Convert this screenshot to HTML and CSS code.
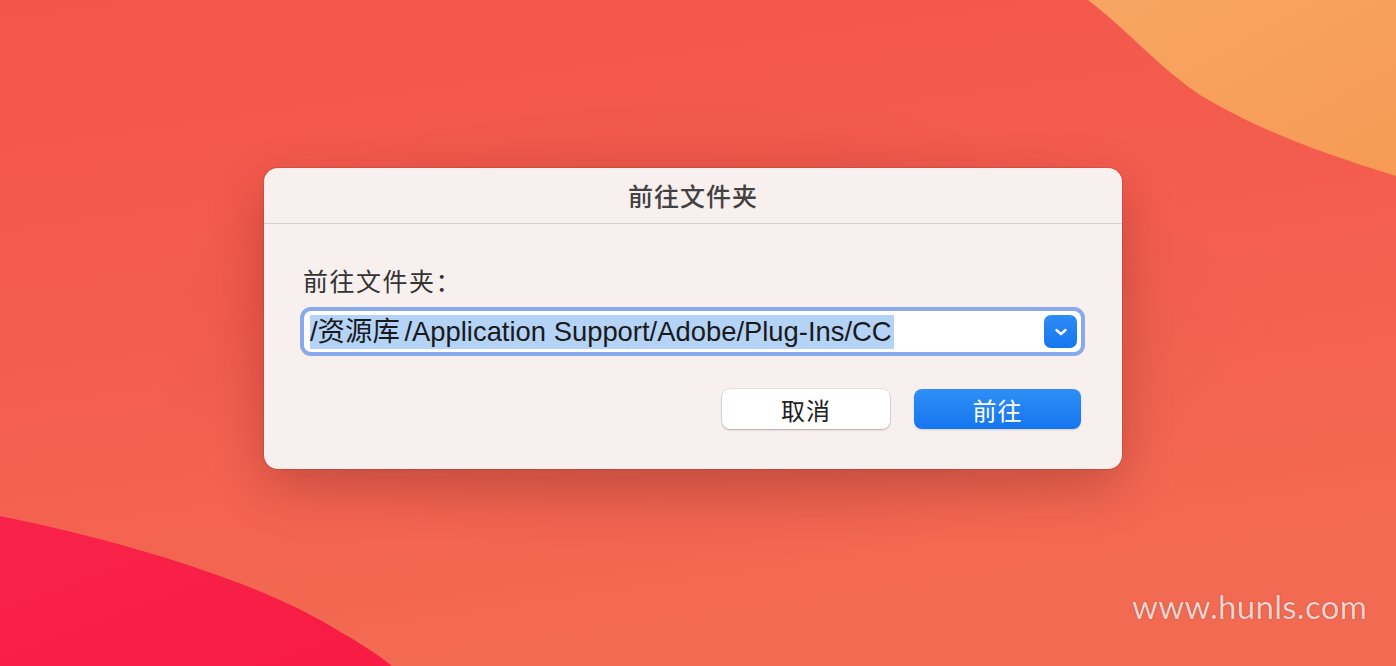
FILE: index.html
```html
<!DOCTYPE html>
<html lang="zh-CN">
<head>
<meta charset="utf-8">
<title>前往文件夹</title>
<link rel="stylesheet" href="styles.css">
</head>
<body>
<svg class="wallpaper" width="1396" height="666" viewBox="0 0 1396 666" preserveAspectRatio="none">
  <defs>
    <linearGradient id="bg" x1="0" y1="0" x2="0.3" y2="1">
      <stop offset="0" stop-color="#f3554a"/>
      <stop offset="0.5" stop-color="#f45d4e"/>
      <stop offset="1" stop-color="#f36a52"/>
    </linearGradient>
    <linearGradient id="orange" x1="0" y1="0" x2="1" y2="1">
      <stop offset="0" stop-color="#f7a663"/>
      <stop offset="1" stop-color="#f69a55"/>
    </linearGradient>
    <linearGradient id="crimson" x1="0" y1="0" x2="1" y2="1">
      <stop offset="0" stop-color="#f8234a"/>
      <stop offset="1" stop-color="#f81b43"/>
    </linearGradient>
    <radialGradient id="shade" cx="0.5" cy="0.5" r="0.5">
      <stop offset="0" stop-color="#000" stop-opacity="0.10"/>
      <stop offset="1" stop-color="#000" stop-opacity="0"/>
    </radialGradient>
  </defs>
  <rect width="1396" height="666" fill="url(#bg)"/>
  <path d="M1088 0 C1125 28 1160 68 1200 95 C1250 125 1310 150 1396 176 L1396 0 Z" fill="url(#orange)"/>
  <path d="M0 516 C120 540 250 580 320 620 C350 637 375 652 392 666 L0 666 Z" fill="url(#crimson)"/>
  <ellipse cx="693" cy="330" rx="560" ry="240" fill="url(#shade)"/>
</svg>

<main class="dialog">
  <header class="dialog-title">前往文件夹</header>
  <section class="dialog-body">
    <div class="field-label">前往文件夹：</div>
    <div class="combo">
      <div class="combo-input"><span class="selection">/资源库<span class="thin"> </span>/Application Support/Adobe/Plug-Ins/CC</span></div>
      <div class="combo-button">
        <svg width="14" height="10" viewBox="0 0 14 10"><path d="M2.5 3 L7 7.2 L11.5 3" fill="none" stroke="#fff" stroke-width="2.4" stroke-linecap="round" stroke-linejoin="round"/></svg>
      </div>
    </div>
    <div class="actions">
      <button class="btn btn-cancel">取消</button>
      <button class="btn btn-go">前往</button>
    </div>
  </section>
</main>

<div class="watermark">www.hunls.com</div>
</body>
</html>
```

FILE: styles.css
```css
html, body {
  margin: 0;
  padding: 0;
  width: 1396px;
  height: 666px;
  overflow: hidden;
}

body {
  position: relative;
  font-family: "Noto Sans CJK SC", "Noto Sans", sans-serif;
  display: flex;
  flex-direction: column;
  align-items: flex-start;
  padding: 168px 0 0 264px;
  box-sizing: border-box;
  background: #f35d4e;
}

.wallpaper {
  position: absolute;
  left: 0;
  top: 0;
  z-index: 0;
}

.dialog {
  position: relative;
  z-index: 1;
  width: 858px;
  height: 301px;
  box-sizing: border-box;
  background: #f8f0ee;
  border-radius: 14px;
  box-shadow: 0 18px 50px rgba(90, 20, 20, 0.28), 0 0 0 1px rgba(150, 60, 50, 0.25);
  display: flex;
  flex-direction: column;
}

.dialog-title {
  height: 56px;
  border-bottom: 1px solid #d9cfcd;
  display: flex;
  align-items: center;
  justify-content: center;
  font-size: 25px;
  font-weight: 500;
  color: #444142;
  letter-spacing: 1px;
  box-sizing: border-box;
  padding-bottom: 2px;
}

.dialog-body {
  padding: 38px 37px 0 36px;
  display: flex;
  flex-direction: column;
}

.field-label {
  font-size: 25px;
  line-height: 36px;
  color: #333;
  letter-spacing: 1.5px;
  height: 36px;
  padding-left: 3px;
}

.combo {
  margin-top: 9px;
  height: 49px;
  box-sizing: border-box;
  border: 4px solid #88a9ea;
  border-radius: 11px;
  background: #fff;
  display: flex;
  align-items: center;
  padding: 0 4px 0 6px;
}

.combo-input {
  flex: 1;
  display: flex;
  align-items: center;
  height: 34px;
}

.selection {
  background: #b4d3f7;
  color: #1a1a1a;
  font-family: "Liberation Sans", "Noto Sans CJK SC", sans-serif;
  font-size: 27.4px;
  line-height: 34px;
  height: 34px;
  padding-right: 2px;
  letter-spacing: 0px;
  white-space: pre;
}

.thin {
  letter-spacing: -3px;
}

.combo-button {
  width: 33px;
  height: 33px;
  border-radius: 7px;
  background: linear-gradient(#2e8cf5, #1676ee);
  display: flex;
  align-items: center;
  justify-content: center;
}

.actions {
  margin-top: 33px;
  display: flex;
  justify-content: flex-end;
  gap: 24px;
  padding-right: 4px;
}

.btn {
  width: 168px;
  height: 40px;
  border-radius: 8px;
  font-family: "Noto Sans CJK SC", sans-serif;
  font-size: 24px;
  font-weight: 400;
  letter-spacing: 1px;
  border: none;
  padding: 0;
  display: flex;
  align-items: center;
  justify-content: center;
}

.btn-cancel {
  background: #ffffff;
  color: #222;
  box-shadow: 0 1px 2px rgba(0, 0, 0, 0.25), 0 0 0 0.5px rgba(0, 0, 0, 0.12);
}

.btn-go {
  width: 167px;
  background: linear-gradient(#2f8ff6, #1575ee);
  color: #fff;
  box-shadow: 0 1px 2px rgba(0, 0, 0, 0.15);
}

.watermark {
  position: absolute;
  z-index: 2;
  left: 1132px;
  top: 586px;
  font-family: "Lato", "Noto Sans", sans-serif;
  font-weight: 400;
  font-size: 33px;
  color: #f6d2ca;
  letter-spacing: 0.3px;
  text-shadow: 0 0 1px rgba(110, 30, 25, 0.9);
}
```
